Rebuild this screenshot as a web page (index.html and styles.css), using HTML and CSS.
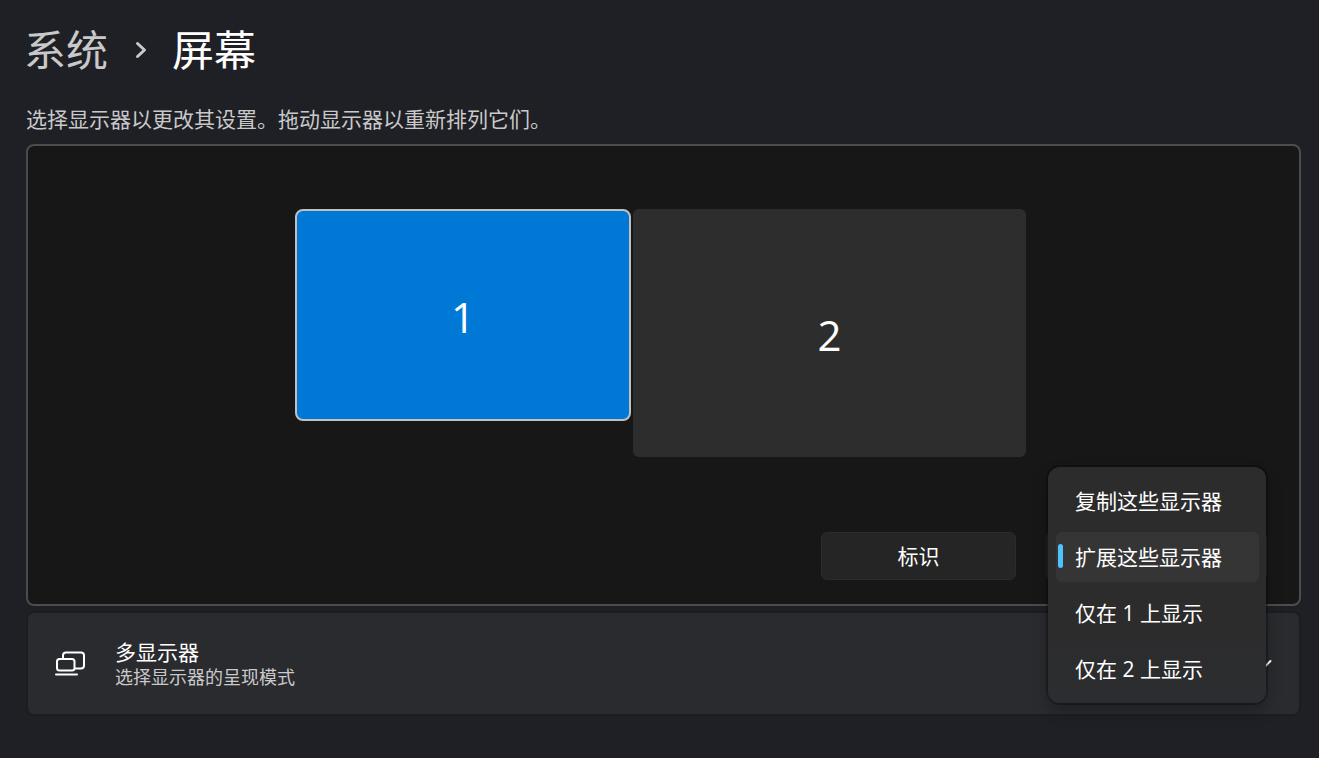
FILE: index.html
```html
<!DOCTYPE html>
<html lang="zh-CN">

<head>
    <meta charset="UTF-8" />
    <meta name="viewport" content="width=device-width, initial-scale=1.0" />
    <title>屏幕</title>
    <link rel="stylesheet" href="styles.css">
</head>

<body>
    <main class="page">
        <nav class="breadcrumb">
            <a class="crumb" href="#">系统</a>
            <svg class="crumb-arrow" width="12" height="18" viewBox="0 0 12 18">
                <path d="M2.500 2.500L9.500 9L2.500 15.500" />
            </svg>
            <h1 class="title">屏幕</h1>
        </nav>

        <p class="hint">选择显示器以更改其设置。拖动显示器以重新排列它们。</p>

        <section class="arrange">
            <div class="monitors">
                <button type="button" class="monitor monitor-1 active">1</button>
                <button type="button" class="monitor monitor-2">2</button>
            </div>
            <div class="actions">
                <button type="button" class="identify">标识</button>
                <div class="mode">
                    <button type="button" class="mode-toggle" aria-haspopup="true" aria-expanded="true" aria-labelledby="modeExtend"></button>
                    <!-- 展开的下拉菜单 -->
                    <div class="menu">
                        <button type="button" class="menu-item">复制这些显示器</button>
                        <button type="button" class="menu-item selected" id="modeExtend">扩展这些显示器</button>
                        <button type="button" class="menu-item">仅在 1 上显示</button>
                        <button type="button" class="menu-item">仅在 2 上显示</button>
                    </div>
                </div>
            </div>
        </section>

        <button type="button" class="card">
            <svg class="card-icon" width="32" height="26" viewBox="0 0 32 26">
                <path d="M9 7V4.500A3 3 0 0 1 12 1.500H27A3 3 0 0 1 30 4.500V14.500A3 3 0 0 1 27 17.500H21" />
                <rect x="3" y="8" width="17.500" height="11.500" rx="2.500" />
                <path d="M2 23.500H23" />
            </svg>
            <span class="card-text">
                <span class="card-title">多显示器</span>
                <span class="card-desc">选择显示器的呈现模式</span>
            </span>
            <svg class="card-arrow" width="16" height="10" viewBox="0 0 16 10">
                <path d="M1.500 2L7.500 8L13.500 2" />
            </svg>
        </button>
    </main>
</body>

</html>
```
FILE: styles.css
```css
* {
    box-sizing: border-box;
}

body {
    margin: 0;
    background: #1f2025;
    color: #fff;
    font-family: "Open Sans", "Noto Sans CJK SC", sans-serif;
    font-size: 21px;
}

button {
    margin: 0;
    padding: 0;
    border: 0;
    color: inherit;
    font: inherit;
}

svg {
    fill: none;
    stroke: #fff;
    stroke-width: 2;
    stroke-linecap: round;
    stroke-linejoin: round;
}

.page {
    padding: 20px 18px 20px 26px;
}

.breadcrumb {
    display: flex;
    align-items: center;
    height: 60px;
    font-size: 42px;
    line-height: 60px;
}

.crumb {
    margin-left: -2px;
    color: #c9c9ca;
    text-decoration: none;
}

.crumb-arrow {
    margin: 0 25px 0 27px;
    stroke: #c9c9ca;
    stroke-width: 3;
}

.title {
    margin: 0;
    font-size: 42px;
    font-weight: 400;
}

.hint {
    margin: 25px 0 11px;
    color: #c9c9ca;
    line-height: 28px;
}

.arrange {
    padding: 63px 32px 24px 26px;
    background: #171717;
    border: 2px solid #4c4c4f;
    border-radius: 8px;
}

.monitors {
    display: flex;
    justify-content: center;
    align-items: flex-start;
    gap: 2px;
}

.monitor {
    padding-top: 3px;
    background: #2d2d2d;
    border-radius: 6px;
    font-size: 42px;
}

.monitor-1 {
    width: 336px;
    height: 212px;
}

.monitor-2 {
    width: 393px;
    height: 248px;
}

.monitor.active {
    background: #0078d6;
    border: 2px solid #c0c0c0;
    border-radius: 8px;
}

.actions {
    display: flex;
    justify-content: flex-end;
    gap: 30px;
    margin-top: 75px;
}

.identify,
.mode-toggle {
    height: 48px;
    padding-bottom: 2px;
    background: #252525;
    border: 1px solid #2b2b2b;
    border-radius: 6px;
}

.identify {
    width: 195px;
}

.mode {
    position: relative;
    width: 221px;
    height: 48px;
}

.mode-toggle {
    width: 100%;
}

.menu {
    position: absolute;
    top: -65px;
    left: 2px;
    right: 1px;
    display: flex;
    flex-direction: column;
    gap: 6px;
    padding: 9px 7px 9px 8px;
    background: linear-gradient(#2c2c2c 55%, #2c2d30);
    border-radius: 12px;
    box-shadow: 0 0 0 2px rgba(0, 0, 0, 0.25), 0 8px 16px rgba(0, 0, 0, 0.26);
}

.menu-item {
    display: flex;
    align-items: center;
    height: 50px;
    padding: 0 0 2px 19px;
    background: none;
    border-radius: 6px;
}

.menu-item.selected {
    padding-left: 2px;
    background: #353535;
}

.menu-item.selected::before {
    content: "";
    width: 5px;
    height: 24px;
    margin-right: 12px;
    background: #4cc2ff;
    border-radius: 3px;
}

.card {
    display: flex;
    align-items: center;
    width: 100%;
    height: 105px;
    margin-top: 5px;
    padding: 0 26px;
    background: #2a2b2f;
    border: 2px solid #1c1d21;
    border-radius: 8px;
    text-align: left;
}

.card-text {
    display: flex;
    flex: 1;
    flex-direction: column;
    margin-left: 29px;
}

.card-title {
    line-height: 26px;
}

.card-desc {
    color: #c9c9ca;
    font-size: 18px;
    line-height: 24px;
}
```
